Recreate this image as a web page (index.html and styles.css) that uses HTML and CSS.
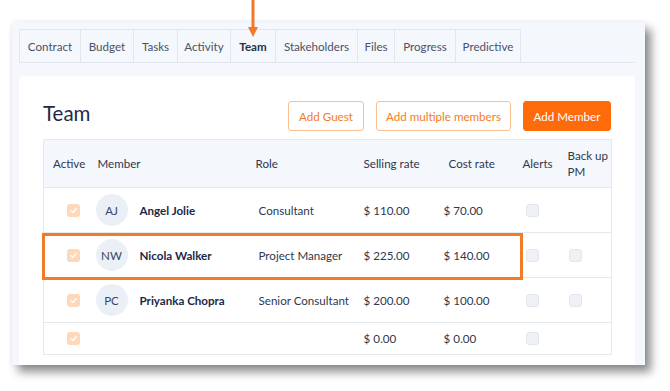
FILE: index.html
```html
<!DOCTYPE html>
<html>
<head>
<meta charset="utf-8">
<link rel="stylesheet" href="styles.css">
</head>
<body>
<div class="panel">
  <div class="tabs">
    <div class="tab">Contract</div>
    <div class="tab">Budget</div>
    <div class="tab">Tasks</div>
    <div class="tab">Activity</div>
    <div class="tab active">Team</div>
    <div class="tab">Stakeholders</div>
    <div class="tab">Files</div>
    <div class="tab">Progress</div>
    <div class="tab">Predictive</div>
  </div>
  <div class="card">
    <div class="card-head">
      <h1 class="title">Team</h1>
      <div class="actions">
        <button class="btn outline">Add Guest</button>
        <button class="btn outline">Add multiple members</button>
        <button class="btn solid">Add Member</button>
      </div>
    </div>
    <div class="table-wrap">
      <table class="team">
        <colgroup>
          <col class="c-active"><col class="c-member"><col class="c-role"><col class="c-sell"><col class="c-cost"><col class="c-alert"><col class="c-backup">
        </colgroup>
        <thead>
          <tr>
            <th>Active</th><th>Member</th><th>Role</th><th>Selling rate</th><th>Cost rate</th><th>Alerts</th><th>Back up<br>PM</th>
          </tr>
        </thead>
        <tbody>
          <tr>
            <td><span class="chk on"><svg viewBox="0 0 13 13" width="13" height="13"><polyline points="4,6.8 5.8,8.5 9,4.8" fill="none" stroke="#fff" stroke-width="1.4" stroke-linecap="round" stroke-linejoin="round"/></svg></span></td>
            <td><div class="member"><span class="avatar">AJ</span><span class="name">Angel Jolie</span></div></td>
            <td class="role">Consultant</td><td>$ 110.00</td><td class="cost">$ 70.00</td>
            <td><span class="chk off"></span></td><td></td>
          </tr>
          <tr>
            <td><span class="chk on"><svg viewBox="0 0 13 13" width="13" height="13"><polyline points="4,6.8 5.8,8.5 9,4.8" fill="none" stroke="#fff" stroke-width="1.4" stroke-linecap="round" stroke-linejoin="round"/></svg></span></td>
            <td><div class="member"><span class="avatar">NW</span><span class="name">Nicola Walker</span></div></td>
            <td class="role">Project Manager</td><td>$ 225.00</td><td class="cost">$ 140.00</td>
            <td><span class="chk off"></span></td><td><span class="chk off"></span></td>
          </tr>
          <tr>
            <td><span class="chk on"><svg viewBox="0 0 13 13" width="13" height="13"><polyline points="4,6.8 5.8,8.5 9,4.8" fill="none" stroke="#fff" stroke-width="1.4" stroke-linecap="round" stroke-linejoin="round"/></svg></span></td>
            <td><div class="member"><span class="avatar">PC</span><span class="name">Priyanka Chopra</span></div></td>
            <td class="role">Senior Consultant</td><td>$ 200.00</td><td class="cost">$ 100.00</td>
            <td><span class="chk off"></span></td><td><span class="chk off"></span></td>
          </tr>
          <tr class="short">
            <td><span class="chk on"><svg viewBox="0 0 13 13" width="13" height="13"><polyline points="4,6.8 5.8,8.5 9,4.8" fill="none" stroke="#fff" stroke-width="1.4" stroke-linecap="round" stroke-linejoin="round"/></svg></span></td>
            <td></td><td class="role"></td><td>$ 0.00</td><td class="cost">$ 0.00</td>
            <td><span class="chk off"></span></td><td></td>
          </tr>
        </tbody>
      </table>
      <div class="highlight"></div>
    </div>
  </div>
</div>
<div class="arrow">
  <svg viewBox="0 0 10 38" width="10" height="38"><rect x="3.5" y="0" width="3" height="29" fill="#f07a2a"/><polygon points="0,27 10,27 5,37" fill="#f07a2a"/></svg>
</div>
</body>
</html>
```
FILE: styles.css
```css
* { box-sizing: border-box; }
html, body { margin: 0; padding: 0; background: #fff; }
body {
  width: 670px; height: 391px; overflow: hidden; position: relative;
  font-family: "Lato", "Noto Sans", sans-serif; color: #2e3754;
  padding: 22px 0 0 12px;
}
.panel {
  width: 633px; height: 343px; background: #f4f7fb;
  padding: 7px 10px 0 7px; overflow: hidden;
  box-shadow: 6px 7px 9px rgba(0,0,0,0.45), 0 0 4px rgba(0,0,0,0.08);
}
.tabs {
  display: flex; height: 34px; border-bottom: 1px solid #e2e7ee;
}
.tab {
  height: 33px; display: flex; align-items: center; justify-content: center;
  border: 1px solid #e2e7ee; border-right: none; border-bottom: none;
  font-size: 11.6px; color: #4b5266; background: #f4f7fb; white-space: nowrap;
}
.tab:nth-child(1) { width: 61px; }
.tab:nth-child(2) { width: 53px; }
.tab:nth-child(3) { width: 44px; }
.tab:nth-child(4) { width: 53px; }
.tab:nth-child(5) { width: 45px; }
.tab:nth-child(6) { width: 82px; }
.tab:nth-child(7) { width: 37px; }
.tab:nth-child(8) { width: 61px; }
.tab:nth-child(9) { width: 66px; border-right: 1px solid #e2e7ee; }
.tab.active { font-weight: 700; color: #2b3142; }
.card {
  margin-top: 13px; background: #fff; border-radius: 4px 4px 0 0;
  height: 300px; padding: 25px 24px 0 24px;
}
.card-head { display: flex; justify-content: space-between; align-items: flex-start; height: 38px; }
.title { margin: 0; font-size: 20.5px; font-weight: 400; color: #1f2a4b; line-height: 24px; }
.actions { display: flex; gap: 12px; }
.btn {
  height: 30px; border-radius: 3px; font-family: inherit; font-size: 11.6px;
  padding: 0; display: flex; align-items: center; justify-content: center; white-space: nowrap;
}
.btn.outline { background: #fff; border: 1px solid #fbbf90; color: #f47c22; }
.btn.outline:nth-child(1) { width: 76px; }
.btn.outline:nth-child(2) { width: 135px; }
.btn.solid { width: 88px; background: #fd6b0b; border: 1px solid #fd6b0b; color: #fff; }
.table-wrap { position: relative; width: 568px; }
.team {
  width: 568px; border-collapse: collapse; table-layout: fixed;
  border: 1px solid #e4e9f0; font-size: 11.6px;
}
.c-active { width: 45px; } .c-member { width: 158px; } .c-role { width: 108px; }
.c-sell { width: 85px; } .c-cost { width: 74px; } .c-alert { width: 45px; } .c-backup { width: 53px; }
.team th {
  background: #f4f7fb; height: 48px; text-align: left; font-weight: 400;
  color: #2f3850; padding: 0 0 0 9px; line-height: 16px; white-space: nowrap;
}
.team td {
  height: 45px; padding: 0 0 0 9px; border-top: 1px solid #e4e9f0; color: #2f3850; white-space: nowrap;
}
.team td.role { padding-left: 12px; }
.team td.cost { padding-left: 4px; }
.team tr.short td { height: 32px; }
.chk { display: block; width: 13px; height: 13px; border-radius: 3px; }
.chk svg { display: block; }
.chk.on { background: #fdd8ba; margin-left: 14px; }
.chk.off { background: #eef1f5; border: 1px solid #e3e7ed; margin-left: 3px; }
.team td:last-child .chk.off { margin-left: 1px; }
.member { display: flex; align-items: center; gap: 12px; margin-left: -2px; }
.avatar {
  width: 32px; height: 32px; border-radius: 50%; background: #ebf0f7;
  display: flex; align-items: center; justify-content: center; color: #3a4562; font-size: 11.6px;
}
.name { font-weight: 700; color: #1d2846; }
.highlight {
  position: absolute; left: -1px; top: 94px; width: 481px; height: 47px;
  border: 3px solid #f37a27;
}
.arrow { position: absolute; left: 248px; top: 0; }
.arrow svg { display: block; }
```
